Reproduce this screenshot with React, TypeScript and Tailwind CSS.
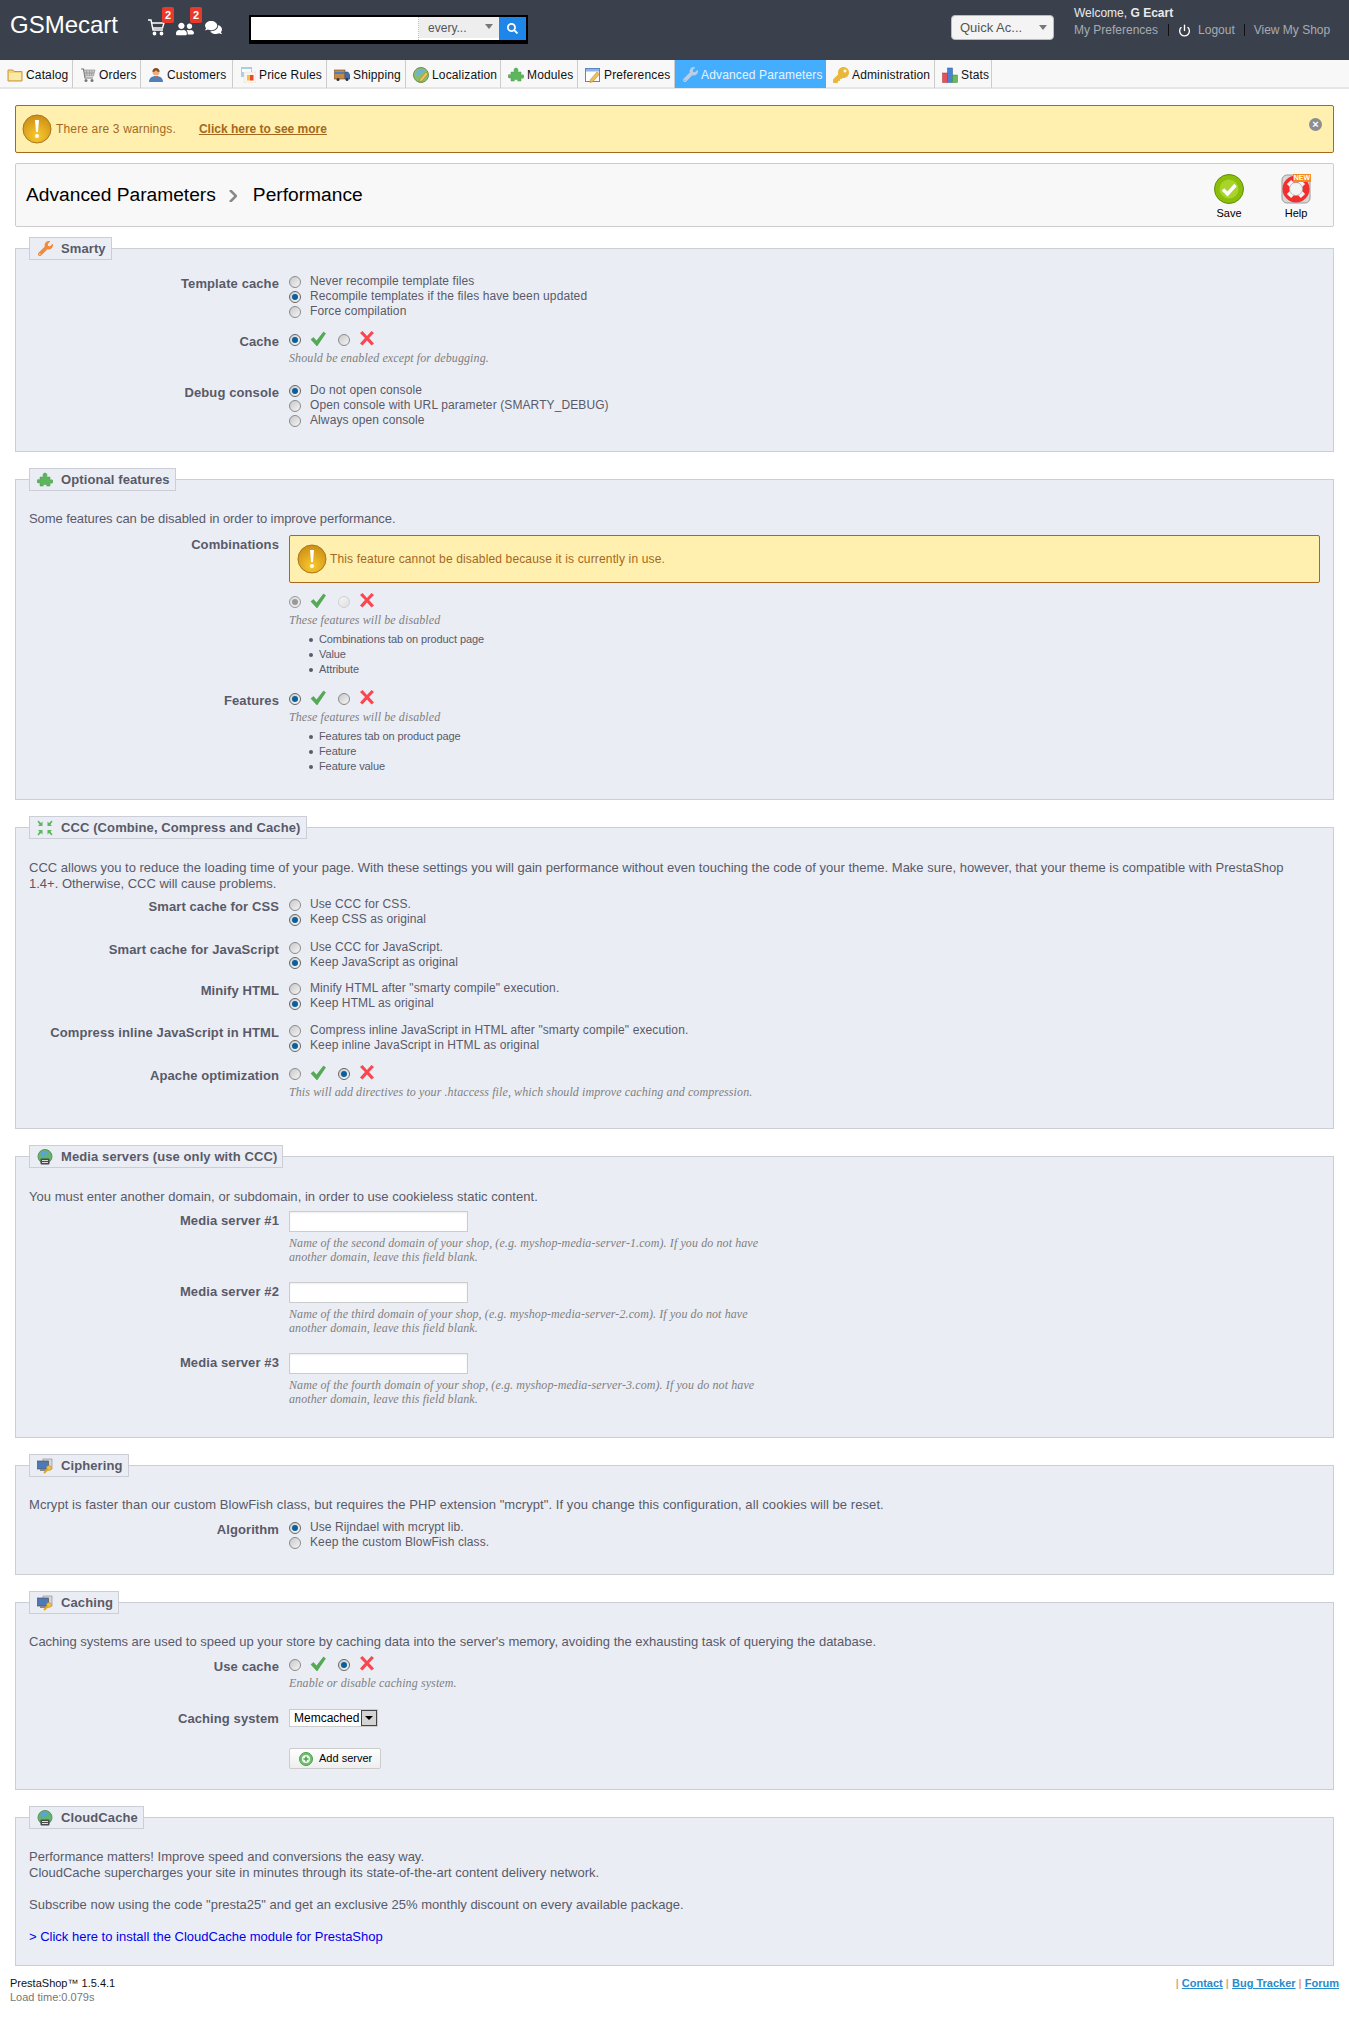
import React from "react";
import { FaComments, FaKey, FaSearch, FaUserFriends, FaWrench } from "react-icons/fa";
import { Power } from "lucide-react";

const FolderIcon = () => (
  <svg width="16" height="16" viewBox="0 0 16 16">
    <path d="M1 3h5l1 1.5h8V14H1z" fill="#f3d27a" stroke="#c99a3c" />
    <rect x="2" y="6" width="12" height="7" fill="#fbe9a8" />
  </svg>
);

const CartIcon = () => (
  <svg width="16" height="16" viewBox="0 0 16 16">
    <path d="M1 2h2.500l1.500 9h8" fill="none" stroke="#777" strokeWidth="1.200" />
    <path d="M4 3h11l-1.500 6H5z" fill="#c9c9c9" stroke="#888" strokeWidth=".6" />
    <path d="M6.500 3.500l.5 5M9.500 3.500v5M12 3.500l-.5 5M4.500 6h9.500" stroke="#888" strokeWidth=".6" />
    <circle cx="6" cy="13.500" r="1.500" fill="#777" />
    <circle cx="12" cy="13.500" r="1.500" fill="#777" />
  </svg>
);

const CustomerIcon = () => (
  <svg width="16" height="16" viewBox="0 0 16 16">
    <path d="M1 15c0-4 3-6 7-6s7 2 7 6z" fill="#4f7fb8" />
    <path d="M7 9l1 3 1-3z" fill="#e8602c" />
    <circle cx="8" cy="5" r="3.500" fill="#e8b183" />
    <path d="M4.500 5c0-3 1.500-4 3.500-4s3.500 1 3.500 4c-2 0-3-1-3.500-2-.5 1-1.500 2-3.500 2z" fill="#8a4a20" />
  </svg>
);

const PriceIcon = () => (
  <svg width="16" height="16" viewBox="0 0 16 16">
    <rect x="1" y="0" width="11" height="10" fill="#a8cdea" />
    <rect x="2" y="2" width="9" height="3" fill="#fff" />
    <rect x="4" y="5" width="12" height="11" fill="#fbf5e8" stroke="#ddd" strokeWidth=".5" />
    <rect x="7" y="8" width="3.500" height="5.500" fill="#f6c244" />
    <rect x="10" y="8" width="3.500" height="5.500" fill="#e8482f" />
  </svg>
);

const TruckIcon = () => (
  <svg width="16" height="16" viewBox="0 0 16 16">
    <rect x="0" y="3" width="11" height="9" fill="#c58a4a" stroke="#6b4a2a" strokeWidth=".6" />
    <rect x="0.500" y="5" width="10" height="2" fill="#4c7fc0" />
    <path d="M11 5h3l2 3v4h-5z" fill="#3f6fb0" stroke="#2b4a78" strokeWidth=".5" />
    <circle cx="4" cy="12.500" r="1.500" fill="#333" />
    <circle cx="13" cy="12.500" r="1.500" fill="#333" />
  </svg>
);

const GlobeIcon = () => (
  <svg width="16" height="16" viewBox="0 0 16 16">
    <circle cx="8" cy="8" r="7.500" fill="#86c06a" stroke="#6d8f55" />
    <path d="M4 3c3-2 6-1 8 1-2 2-5 2-6 5-1 1-3 0-3-2z" fill="#73b0d8" />
    <path d="M13 5l2 2-6 7-3 1 1-3z" fill="#eec35a" stroke="#a57a24" strokeWidth=".5" />
  </svg>
);

const PrefsIcon = () => (
  <svg width="16" height="16" viewBox="0 0 16 16">
    <rect x="0.500" y="1.500" width="14" height="13" fill="#fff" stroke="#5b85c0" />
    <rect x="1" y="2" width="13" height="2.500" fill="#8fb4e3" />
    <path d="M12 5l2.500 2-6.500 7.500-3 1 .5-3z" fill="#f1bf58" stroke="#a8792a" strokeWidth=".5" />
  </svg>
);

const StatsIcon = () => (
  <svg width="16" height="16" viewBox="0 0 16 16">
    <rect x="0.500" y="6" width="5" height="9.500" fill="#e8505b" stroke="#a33" strokeWidth=".5" />
    <rect x="5.500" y="1" width="5" height="14.500" fill="#4b82d4" stroke="#2b5aa0" strokeWidth=".5" />
    <rect x="10.500" y="8" width="5" height="7.500" fill="#6db85a" stroke="#3c8a3a" strokeWidth=".5" />
  </svg>
);

const PuzzleIcon = () => (
  <svg width="16" height="16" viewBox="0 0 16 16" fill="#5db65d" stroke="#4a9a4a" strokeWidth=".5">
    <path d="M3 5h3.500C5.500 3.500 6 1 8 1s2.500 2.500 1.500 4H13v3.200c1.500-1 3-.5 3 1.300s-1.500 2.300-3 1.300V14H9.500c1-1.500.5-1.500-.5-1.500H7c-1 0-1.500 0-.5 1.500H3v-3.500C1.500 11.500 0 11 0 9.200S1.500 7 3 8z" />
  </svg>
);

const CompressIcon = () => (
  <svg width="16" height="16" viewBox="0 0 16 16" fill="#5cb85c">
    <path d="M0.500 1.500l1-1L4 3l1.500-1.500V6H1l1.500-1.500z" />
    <path d="M15.500 1.500l-1-1L12 3l-1.500-1.500V6H15l-1.500-1.500z" />
    <path d="M0.500 14.500l1 1L4 13l1.500 1.500V10H1l1.500 1.500z" />
    <path d="M15.500 14.500l-1 1L12 13l-1.500 1.500V10H15l-1.500 1.500z" />
  </svg>
);

const ServerGlobeIcon = () => (
  <svg width="16" height="16" viewBox="0 0 16 16">
    <circle cx="8" cy="7.500" r="7" fill="#62b56a" stroke="#5f8f68" />
    <path d="M4 3c3-2 6-1 8 1-2 2-4 1-6 4-1 1-3 0-2-5z" fill="#5aa3d6" />
    <rect x="3.500" y="9.500" width="9" height="6" rx="1" fill="#4a4a4a" />
    <rect x="5" y="11" width="6" height="1" fill="#ddd" />
    <rect x="5" y="13" width="6" height="1" fill="#ddd" />
  </svg>
);

const ServerKeyIcon = () => (
  <svg width="16" height="16" viewBox="0 0 16 16">
    <rect x="6" y="1" width="9" height="10" fill="#d5d8de" stroke="#888" strokeWidth=".6" />
    <rect x="0.500" y="3" width="11" height="8" fill="#4d79b8" stroke="#555" strokeWidth=".7" />
    <rect x="3" y="11" width="6" height="2" fill="#888" />
    <circle cx="12" cy="10" r="2.500" fill="#f0c040" stroke="#b88a20" strokeWidth=".5" />
    <path d="M11 11l-4 4" stroke="#e0a820" strokeWidth="2" />
  </svg>
);

const WarnIcon = () => (
  <svg width="30" height="30" viewBox="0 0 30 30" className="shrink-0">
    <defs>
      <radialGradient id="warnFill" cx="50%" cy="75%" r="70%">
        <stop offset="0%" stopColor="#f9c92e" />
        <stop offset="100%" stopColor="#cf9216" />
      </radialGradient>
    </defs>
    <circle cx="15" cy="15" r="14" fill="url(#warnFill)" stroke="#a8761c" />
    <path d="M13 6h4l-1 12h-2z" fill="#fff" />
    <circle cx="15" cy="22" r="2" fill="#fff" />
  </svg>
);

const SaveIcon = () => (
  <svg width="30" height="30" viewBox="0 0 30 30">
    <circle cx="15" cy="15" r="14.500" fill="#8cbf0a" stroke="#5f8f0a" />
    <circle cx="15" cy="15" r="9.500" fill="#a9d42a" />
    <path d="M9 15.500l4.500 4.500 8-9" fill="none" stroke="#fff" strokeWidth="3.500" />
  </svg>
);

const HelpIcon = () => (
  <div className="relative h-[30px] w-[30px]">
    <svg width="30" height="30" viewBox="0 0 30 30">
      <rect x="1" y="1" width="28" height="28" rx="5" fill="#d8d8d8" stroke="#9a9a9a" />
      <circle cx="15" cy="15" r="10" fill="none" stroke="#f22f2f" strokeWidth="7" />
      <path d="M8 8l4 4M22 8l-4 4M8 22l4-4M22 22l-4-4" stroke="#f4f4f4" strokeWidth="6" />
      <circle cx="15" cy="15" r="6.500" fill="#f4f4f4" stroke="#999" strokeWidth=".6" />
    </svg>
    <span className="absolute right-0 top-0 bg-[#f58a1f] px-[1px] text-[7px] font-bold leading-[8px] text-white">NEW</span>
  </div>
);

const CheckIcon = () => (
  <svg width="16" height="16" viewBox="0 0 16 16" className="shrink-0">
    <path d="M1 8.500l2.500-2 3 3.500L13.500 1l2 1.500L7 15z" fill="#52ad52" stroke="#3f8f3f" strokeWidth=".5" />
  </svg>
);

const CrossIcon = () => (
  <svg width="14" height="16" viewBox="0 0 14 16" className="shrink-0">
    <path d="M2.500 1L7 6l4.500-5L14 3 9 8l5 5.500-2.500 2L7 10.500l-4.500 5L0 13.500 5 8 0 3z" fill="#f9464f" />
  </svg>
);

const Radio = ({ on = false, off = false }: { on?: boolean; off?: boolean }) => (
  <span
    className={`mt-[2px] flex h-[12px] w-[12px] shrink-0 items-center justify-center rounded-full border bg-gradient-to-br ${
      off
        ? on
          ? "border-[#999] from-[#ddd] to-[#eee]"
          : "border-[#d0d0d0] from-[#f5f5f5] to-[#e0e0e0]"
        : on
          ? "border-[#666] from-[#ccc] to-[#fafafa]"
          : "border-[#8a8a8a] from-[#c8c8c8] to-[#f6f6f6]"
    }`}
  >
    {on && <span className={`h-[6px] w-[6px] rounded-full ${off ? "bg-[#999]" : "bg-[#0a5f9e]"}`}></span>}
  </span>
);

const Options = ({ items, selected }: { items: string[]; selected: number }) => (
  <div className="tracking-[0.1px]">
    {items.map((text, index) => (
      <div key={index} className="flex h-[15px] gap-[9px] leading-[15px]">
        <Radio on={index === selected} />
        <span className="whitespace-nowrap">{text}</span>
      </div>
    ))}
  </div>
);

const YesNo = ({ yes = true, disabled = false }: { yes?: boolean; disabled?: boolean }) => (
  <div className="flex h-[15px] items-start">
    <Radio on={yes} off={disabled} />
    <span className="ml-[9px] w-[28px] -mt-[1px]">
      <CheckIcon />
    </span>
    <Radio on={!yes} off={disabled} />
    <span className="ml-[10px] -mt-[2px]">
      <CrossIcon />
    </span>
  </div>
);

const Hint = ({ children }: { children: React.ReactNode }) => (
  <p className="mt-[4px] whitespace-nowrap font-['Liberation_Serif'] text-[12px] italic leading-[14px] tracking-[0.1px] text-[#7f7f7f]">
    {children}
  </p>
);

const BulletList = ({ items }: { items: string[] }) => (
  <ul className="ml-[20px] mt-[5px] text-[11px] leading-[15px] tracking-[-0.1px]">
    {items.map((text) => (
      <li key={text} className="flex items-center gap-[6px]">
        <span className="h-[4px] w-[4px] rounded-full bg-[#585a69]"></span>
        {text}
      </li>
    ))}
  </ul>
);

const Row = ({
  label,
  children,
  className = "mb-[13px]",
}: {
  label?: string;
  children: React.ReactNode;
  className?: string;
}) => (
  <div className={`flex ${className}`}>
    <label className="w-[250px] shrink-0 pt-[2px] text-right text-[13px] font-bold leading-[15px] tracking-[0.1px]">{label}</label>
    <div className="ml-[10px] min-w-0 flex-1">{children}</div>
  </div>
);

const Section = ({
  title,
  icon,
  className,
  children,
}: {
  title: string;
  icon: React.ReactNode;
  className: string;
  children: React.ReactNode;
}) => (
  <fieldset className={`mb-4 border border-[#ccced7] bg-[#ebedf4] px-[13px] pt-[13px] ${className}`}>
    <legend className="flex h-[23px] items-center border border-[#ccced7] bg-[#ebedf4] pl-[7px] pr-[5px] text-[13px] font-bold tracking-[0.1px]">
      <span className="mr-[8px] flex w-[16px] justify-center">{icon}</span>
      {title}
    </legend>
    {children}
  </fieldset>
);

const MediaServer = ({ n, word, second }: { n: number; word: string; second: string }) => (
  <Row label={`Media server #${n}`} className="mb-[18px]">
    <input className="block h-[21px] w-[179px] border border-[#ccc] bg-white shadow-[inset_0_1px_2px_#eee]" />
    <Hint>
      Name of the {word} domain of your shop, (e.g. {second}). If you do not have
      <br />
      another domain, leave this field blank.
    </Hint>
  </Row>
);

const tabs = [
  { name: "Catalog", width: "w-[73px]", icon: <FolderIcon /> },
  { name: "Orders", width: "w-[68px]", icon: <CartIcon /> },
  { name: "Customers", width: "w-[92px]", icon: <CustomerIcon /> },
  { name: "Price Rules", width: "w-[94px]", icon: <PriceIcon /> },
  { name: "Shipping", width: "w-[79px]", icon: <TruckIcon /> },
  { name: "Localization", width: "w-[95px]", icon: <GlobeIcon /> },
  { name: "Modules", width: "w-[77px]", icon: <PuzzleIcon /> },
  { name: "Preferences", width: "w-[97px]", icon: <PrefsIcon /> },
  { name: "Advanced Parameters", width: "w-[151px]", icon: <FaWrench className="text-[15px] text-[#b9cfe8]" />, active: true },
  { name: "Administration", width: "w-[109px]", icon: <FaKey className="text-[16px] text-[#e8b83a]" /> },
  { name: "Stats", width: "w-[57px]", icon: <StatsIcon /> },
];

export default function App() {
  return (
    <div className="min-h-[2039px] bg-white font-['Liberation_Sans',Arial,sans-serif] text-[12px] text-[#585a69]">
      <header className="flex h-[60px] bg-[#3b414c] text-white">
        <div className="ml-[10px] mt-[11px] text-[24px] leading-[28px]">GSMecart</div>

        <div className="ml-[30px] mt-[19px] flex">
          <div className="relative w-[28px]">
            <svg width="18" height="17" viewBox="0 0 18 17" fill="none" stroke="#fff" strokeWidth="1.400">
              <path d="M0 1h3l2 10h10" />
              <path d="M4 4h12l-1.500 5H5" />
              <circle cx="6.500" cy="14.500" r="1.200" fill="#fff" />
              <circle cx="13.500" cy="14.500" r="1.200" fill="#fff" />
            </svg>
            <span className="absolute left-[14px] -top-[12px] flex h-[16px] w-[12px] items-center justify-center rounded-[2px] bg-[#e8392c] text-[11px] font-bold">2</span>
          </div>
          <div className="relative w-[29px]">
            <FaUserFriends className="mt-[1px] text-[18px]" />
            <span className="absolute left-[14px] -top-[12px] flex h-[16px] w-[12px] items-center justify-center rounded-[2px] bg-[#e8392c] text-[11px] font-bold">2</span>
          </div>
          <FaComments className="text-[17px]" />
        </div>

        <div className="ml-[27px] mt-[15px] flex h-[29px] w-[279px] border-2 border-b-[4px] border-black bg-white">
          <div className="w-[168px] border-r border-dotted border-[#bbb]"></div>
          <div className="flex h-[21px] w-[80px] items-center justify-between bg-[#eee] pl-[9px] pr-[6px] text-[#555]">
            every...
            <span className="mb-[2px] border-x-[4px] border-t-[5px] border-x-transparent border-t-[#777]"></span>
          </div>
          <div className="flex w-[27px] items-center justify-center bg-[#1e86e8]">
            <FaSearch className="text-[11px]" />
          </div>
        </div>

        <div className="ml-auto mt-[15px] flex h-[25px] w-[103px] items-center justify-between rounded-[4px] border border-[#bbb] bg-[#f4f4f4] pl-[8px] pr-[6px] text-[13px] text-[#555]">
          Quick Ac...
          <span className="border-x-[4px] border-t-[5px] border-x-transparent border-t-[#777]"></span>
        </div>

        <div className="ml-[20px] w-[275px] whitespace-nowrap pt-[5px] text-[#a6abb3]">
          <div className="leading-[16px] text-[#e8eaec]">
            Welcome, <b>G Ecart</b>
          </div>
          <div className="mt-[1px] flex h-[16px] items-center leading-[16px]">
            My Preferences
            <span className="ml-[10px] h-[12px] w-px bg-[#111]"></span>
            <Power size={13} strokeWidth={2.500} className="ml-[9px] text-white" />
            <span className="ml-[7px]">Logout</span>
            <span className="ml-[9px] h-[12px] w-px bg-[#111]"></span>
            <span className="ml-[9px]">View My Shop</span>
          </div>
        </div>
      </header>

      <nav className="flex h-[29px] border-b-2 border-[#e6e6e6] bg-[#f8f8f8]">
        {tabs.map((tab) => (
          <div
            key={tab.name}
            className={`flex h-[28px] items-center gap-[3px] whitespace-nowrap pl-[7px] pt-[1px] tracking-[0.15px] text-[#111] ${tab.width} ${
              tab.active ? "bg-[#45adfe] text-[#e8f4ff]" : "border-r border-[#ccc]"
            }`}
          >
            <span className="flex w-[16px] justify-center">{tab.icon}</span>
            {tab.name}
          </div>
        ))}
      </nav>

      <main className="px-[15px]">
        <div className="mt-[16px] flex h-[48px] items-center rounded-[2px] border border-[#a8691f] bg-[#fff0b0] pl-[6px] pr-[11px] text-[#a4681c]">
          <WarnIcon />
          <span className="ml-[4px] tracking-[0.15px]">There are 3 warnings.</span>
          <a className="ml-[23px] font-bold underline">Click here to see more</a>
          <span className="mb-[9px] ml-auto flex h-[13px] w-[13px] items-center justify-center rounded-full bg-[#8b8d92] text-[11px] font-bold leading-none text-white">×</span>
        </div>

        <div className="mb-[10px] mt-[10px] flex h-[64px] items-center rounded-[2px] border border-[#ccc] bg-[#f8f8f8] pl-[10px] text-[19.2px] text-black">
          Advanced Parameters
          <svg width="8" height="12" viewBox="0 0 8 12" className="ml-[13px] mr-[16px] mt-[2px]">
            <path d="M1 0l6 6-6 6" fill="none" stroke="#888" strokeWidth="2.500" />
          </svg>
          Performance
          <div className="ml-auto mr-[22px] flex gap-[37px] pt-[3px] text-center text-[11px] leading-[14px]">
            <div className="flex flex-col items-center">
              <SaveIcon />
              <span className="mt-[2px]">Save</span>
            </div>
            <div className="flex flex-col items-center">
              <HelpIcon />
              <span className="mt-[2px]">Help</span>
            </div>
          </div>
        </div>

        <Section title="Smarty" icon={<FaWrench className="text-[15px] text-[#f08a3c]" />} className="pb-[10px]">
          <Row label="Template cache" className="mb-[13px] mt-[1px]">
            <Options items={["Never recompile template files", "Recompile templates if the files have been updated", "Force compilation"]} selected={1} />
          </Row>
          <Row label="Cache" className="mb-[18px]">
            <YesNo />
            <Hint>Should be enabled except for debugging.</Hint>
          </Row>
          <Row label="Debug console">
            <Options items={["Do not open console", "Open console with URL parameter (SMARTY_DEBUG)", "Always open console"]} selected={0} />
          </Row>
        </Section>

        <Section title="Optional features" icon={<PuzzleIcon />} className="pb-[11px]">
          <p className="mb-[8px] mt-[7px] text-[13px] leading-[16px] tracking-[-0.08px]">Some features can be disabled in order to improve performance.</p>
          <Row label="Combinations" className="mb-[14px]">
            <div className="mb-[11px] flex h-[48px] items-center rounded-[2px] border border-[#a8691f] bg-[#fff0b0] pl-[7px] tracking-[0.15px] text-[#a4681c]">
              <WarnIcon />
              <span className="ml-[3px]">This feature cannot be disabled because it is currently in use.</span>
            </div>
            <YesNo disabled />
            <Hint>These features will be disabled</Hint>
            <BulletList items={["Combinations tab on product page", "Value", "Attribute"]} />
          </Row>
          <Row label="Features" className="mb-[14px]">
            <YesNo />
            <Hint>These features will be disabled</Hint>
            <BulletList items={["Features tab on product page", "Feature", "Feature value"]} />
          </Row>
        </Section>

        <Section title="CCC (Combine, Compress and Cache)" icon={<CompressIcon />} className="pb-[16px]">
          <p className="mb-[5px] mt-[8px] text-[13px] leading-[16px]">
            CCC allows you to reduce the loading time of your page. With these settings you will gain performance without even touching the code of your theme. Make sure, however, that your theme is compatible with PrestaShop
            <br />
            1.4+. Otherwise, CCC will cause problems.
          </p>
          <Row label="Smart cache for CSS">
            <Options items={["Use CCC for CSS.", "Keep CSS as original"]} selected={1} />
          </Row>
          <Row label="Smart cache for JavaScript" className="mb-[11px]">
            <Options items={["Use CCC for JavaScript.", "Keep JavaScript as original"]} selected={1} />
          </Row>
          <Row label="Minify HTML" className="mb-[12px]">
            <Options items={['Minify HTML after "smarty compile" execution.', "Keep HTML as original"]} selected={1} />
          </Row>
          <Row label="Compress inline JavaScript in HTML">
            <Options items={['Compress inline JavaScript in HTML after "smarty compile" execution.', "Keep inline JavaScript in HTML as original"]} selected={1} />
          </Row>
          <Row label="Apache optimization">
            <YesNo yes={false} />
            <Hint>This will add directives to your .htaccess file, which should improve caching and compression.</Hint>
          </Row>
        </Section>

        <Section title="Media servers (use only with CCC)" icon={<ServerGlobeIcon />} className="pb-[13px]">
          <p className="mb-[6px] mt-[8px] text-[13px] leading-[16px] tracking-[0.04px]">You must enter another domain, or subdomain, in order to use cookieless static content.</p>
          <MediaServer n={1} word="second" second="myshop-media-server-1.com" />
          <MediaServer n={2} word="third" second="myshop-media-server-2.com" />
          <MediaServer n={3} word="fourth" second="myshop-media-server-3.com" />
        </Section>

        <Section title="Ciphering" icon={<ServerKeyIcon />} className="pb-[11px]">
          <p className="mb-[7px] mt-[7px] text-[13px] leading-[16px] tracking-[0.07px]">
            Mcrypt is faster than our custom BlowFish class, but requires the PHP extension "mcrypt". If you change this configuration, all cookies will be reset.
          </p>
          <Row label="Algorithm">
            <Options items={["Use Rijndael with mcrypt lib.", "Keep the custom BlowFish class."]} selected={0} />
          </Row>
        </Section>

        <Section title="Caching" icon={<ServerKeyIcon />} className="pb-[7px]">
          <p className="mb-[7px] mt-[7px] text-[13px] leading-[16px]">
            Caching systems are used to speed up your store by caching data into the server's memory, avoiding the exhausting task of querying the database.
          </p>
          <Row label="Use cache" className="mb-[19px]">
            <YesNo yes={false} />
            <Hint>Enable or disable caching system.</Hint>
          </Row>
          <Row label="Caching system" className="mb-[21px]">
            <div className="flex h-[18px] w-[89px] items-center border border-[#ccc] bg-white pl-[4px] text-black">
              <span className="flex-1">Memcached</span>
              <span className="flex h-[16px] w-[16px] items-center justify-center border border-[#444] bg-[#d4d4d4]">
                <span className="border-x-[4px] border-t-[4px] border-x-transparent border-t-black"></span>
              </span>
            </div>
          </Row>
          <Row>
            <button className="flex h-[21px] w-[92px] items-center rounded-[2px] border border-[#ccc] bg-gradient-to-b from-white to-[#eee] pl-[9px] text-[11px] text-black">
              <svg width="14" height="14" viewBox="0 0 14 14" className="mr-[6px]">
                <circle cx="7" cy="7" r="6.500" fill="#6fbf6f" stroke="#4f9f4f" />
                <circle cx="7" cy="7" r="4" fill="#eef8ee" />
                <path d="M7 4.500v5M4.500 7h5" stroke="#4f9f4f" strokeWidth="1.500" />
              </svg>
              Add server
            </button>
          </Row>
        </Section>

        <Section title="CloudCache" icon={<ServerGlobeIcon />} className="pb-[20px]">
          <p className="mt-[7px] text-[13px] leading-[16px]">
            Performance matters! Improve speed and conversions the easy way.
            <br />
            CloudCache supercharges your site in minutes through its state-of-the-art content delivery network.
            <br />
            <br />
            Subscribe now using the code "presta25" and get an exclusive 25% monthly discount on every available package.
            <br />
            <br />
            <a className="text-[#0000ee]">&gt; Click here to install the CloudCache module for PrestaShop</a>
          </p>
        </Section>
      </main>

      <footer className="-mt-[6px] flex justify-between pl-[10px] pr-[10px] text-[11px] leading-[14px]">
        <div>
          <div className="text-[#111]">PrestaShop™ 1.5.4.1</div>
          <div className="text-[#777]">Load time:0.079s</div>
        </div>
        <div className="font-bold text-[#e0a878]">
          | <a className="text-[#268ccd] underline">Contact</a> | <a className="text-[#268ccd] underline">Bug Tracker</a> | <a className="text-[#268ccd] underline">Forum</a>
        </div>
      </footer>
    </div>
  );
}
